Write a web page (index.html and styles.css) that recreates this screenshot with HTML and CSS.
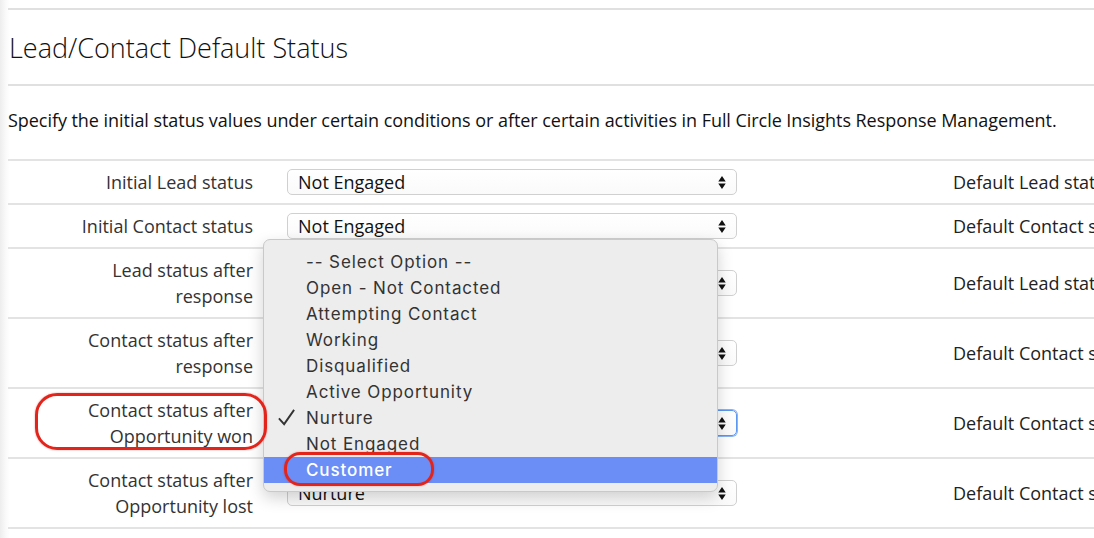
FILE: index.html
```html
<!DOCTYPE html>
<html>
<head>
    <title>Lead/Contact Default Status</title>
    <meta name="viewport" content="width=device-width, initial-scale=1.0">
    <link rel="stylesheet" href="styles.css">
</head>
<body>
    <div class="page">
        <div class="section-title">
            <h2>Lead/Contact Default Status</h2>
        </div>
        <p class="intro">Specify the initial status values under certain conditions or after certain activities in Full Circle Insights Response Management.</p>

        <!-- Status table -->
        <div class="status-table">
            <div class="row">
                <div class="label">Initial Lead status</div>
                <div class="select"><span>Not Engaged</span><svg class="arrows" viewBox="0 0 8 14"><path d="M4 0L8 6H0z M0 8H8L4 14z"/></svg></div>
                <div class="side-label">Default Lead status</div>
            </div>
            <div class="row">
                <div class="label">Initial Contact status</div>
                <div class="select"><span>Not Engaged</span><svg class="arrows" viewBox="0 0 8 14"><path d="M4 0L8 6H0z M0 8H8L4 14z"/></svg></div>
                <div class="side-label">Default Contact status</div>
            </div>
            <div class="row">
                <div class="label">Lead status after<br>response</div>
                <div class="select"><span>Not Engaged</span><svg class="arrows" viewBox="0 0 8 14"><path d="M4 0L8 6H0z M0 8H8L4 14z"/></svg></div>
                <div class="side-label">Default Lead status</div>
            </div>
            <div class="row">
                <div class="label">Contact status after<br>response</div>
                <div class="select"><span>Not Engaged</span><svg class="arrows" viewBox="0 0 8 14"><path d="M4 0L8 6H0z M0 8H8L4 14z"/></svg></div>
                <div class="side-label">Default Contact status</div>
            </div>
            <div class="row">
                <div class="label">Contact status after<br>Opportunity won</div>
                <div class="select focused"><span>Nurture</span><svg class="arrows" viewBox="0 0 8 14"><path d="M4 0L8 6H0z M0 8H8L4 14z"/></svg></div>
                <div class="side-label">Default Contact status</div>
            </div>
            <div class="row">
                <div class="label">Contact status after<br>Opportunity lost</div>
                <div class="select"><span>Nurture</span><svg class="arrows" viewBox="0 0 8 14"><path d="M4 0L8 6H0z M0 8H8L4 14z"/></svg></div>
                <div class="side-label">Default Contact status</div>
            </div>

            <!-- open picklist -->
            <ul class="menu">
                <li>-- Select Option --</li>
                <li>Open - Not Contacted</li>
                <li>Attempting Contact</li>
                <li>Working</li>
                <li>Disqualified</li>
                <li>Active Opportunity</li>
                <li class="checked"><svg class="check" viewBox="0 0 20 20"><path d="M2 11L7.5 17L18 2"/></svg>Nurture</li>
                <li>Not Engaged</li>
                <li class="highlight">Customer</li>
            </ul>

            <!-- annotations -->
            <div class="mark mark-label"></div>
            <div class="mark mark-option"></div>
        </div>
    </div>
</body>
</html>
```

FILE: styles.css
```css
body {
    margin: 0;
    overflow: hidden;
    background: linear-gradient(to right, #ededed 0, #fafafa 6px, #fff 10px);
    font-family: "Open Sans", "Liberation Sans", sans-serif;
    color: #1a1a1a;
}

.page {
    padding: 8px 0 0 8px;
    width: 1200px;
}

.section-title {
    border-top: 2px solid #e0e0e0;
    border-bottom: 2px solid #e0e0e0;
    height: 74px;
    display: flex;
    align-items: center;
}

.section-title h2 {
    margin: 0 0 0 1px;
    font-size: 27px;
    font-weight: 300;
    color: #111;
}

.intro {
    margin: 0;
    height: 73px;
    line-height: 68px;
    font-size: 18px;
    letter-spacing: -0.05px;
    color: #111;
}

.status-table {
    position: relative;
    border-top: 2px solid #e3e3e3;
}

.row {
    display: flex;
    align-items: center;
    padding: 8px 0;
    border-bottom: 2px solid #e3e3e3;
    min-height: 26px;
}

.label {
    width: 245px;
    text-align: right;
    font-size: 18px;
    line-height: 26px;
    color: #333;
}

.select {
    margin-left: 34px;
    height: 24px;
    border: 1px solid #d0d0d0;
    border-radius: 5px;
    background: linear-gradient(#fff, #fafafa);
    display: flex;
    align-items: center;
    justify-content: space-between;
    padding: 0 10px;
    width: 428px;
    font-size: 18px;
    color: #111;
}

.select.focused {
    border-color: #5b97f0;
    box-shadow: 0 0 0 1px #8ab4f8;
}

.arrows {
    width: 8px;
    height: 13px;
    fill: #111;
}

.side-label {
    margin-left: 216px;
    white-space: nowrap;
    font-size: 18px;
    color: #222;
}

.menu {
    position: absolute;
    left: 255px;
    top: 78px;
    width: 453px;
    margin: 0;
    padding: 9px 0 8px;
    list-style: none;
    background: #ededed;
    border: 1px solid #c9c9c9;
    border-radius: 7px;
    box-shadow: 0 6px 16px rgba(0,0,0,0.18);
    font-family: "Inter", "Open Sans", sans-serif;
    font-size: 17px;
    letter-spacing: 0.9px;
    color: #333;
}

.menu li {
    height: 26px;
    line-height: 26px;
    padding-left: 42px;
    position: relative;
}

.menu li.highlight {
    background: #6a8ef5;
    color: #fff;
    font-weight: 500;
}

.check {
    position: absolute;
    left: 13px;
    top: 3px;
    width: 19px;
    height: 19px;
    fill: none;
    stroke: #333;
    stroke-width: 2;
}

.mark {
    position: absolute;
    border: 3px solid #e3241b;
    box-shadow: 0 0 2px rgba(200,0,0,0.4);
}

.mark-label {
    left: 27px;
    top: 232px;
    width: 226px;
    height: 51px;
    border-radius: 22px;
}

.mark-option {
    left: 276px;
    top: 291px;
    width: 144px;
    height: 28px;
    border-radius: 16px;
}
```
